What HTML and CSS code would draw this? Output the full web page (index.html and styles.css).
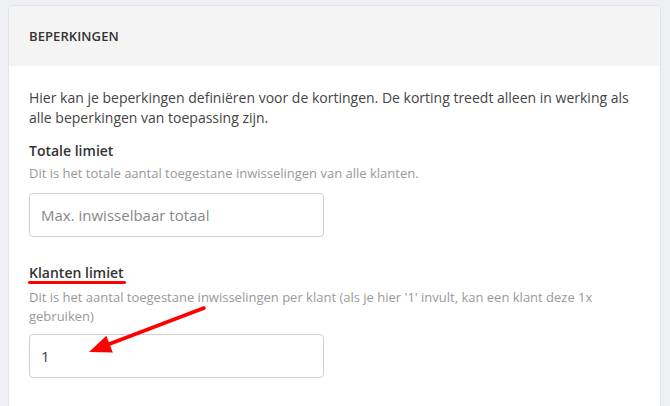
FILE: index.html
```html
<!DOCTYPE html>
<html lang="nl">
<head>
    <meta charset="UTF-8">
    <meta name="viewport" content="width=device-width, initial-scale=1.0">
    <title>Beperkingen</title>
    <link rel="stylesheet" href="styles.css">
</head>
<body>
    <div class="panel">
        <div class="panel-heading">BEPERKINGEN</div>
        <div class="panel-body">
            <p class="intro">Hier kan je beperkingen definiëren voor de kortingen. De korting treedt alleen in werking als alle beperkingen van toepassing zijn.</p>

            <div class="field">
                <label for="totalLimit">Totale limiet</label>
                <p class="help">Dit is het totale aantal toegestane inwisselingen van alle klanten.</p>
                <input type="text" id="totalLimit" placeholder="Max. inwisselbaar totaal">
            </div>

            <div class="field field-customer">
                <label for="customerLimit"><span class="marked">Klanten limiet</span></label>
                <p class="help">Dit is het aantal toegestane inwisselingen per klant (als je hier '1' invult, kan een klant deze 1x gebruiken)</p>
                <input type="text" id="customerLimit" value="1">
            </div>
        </div>
    </div>

    <!-- annotation arrow drawn over the screenshot -->
    <svg class="annotation" width="670" height="406" viewBox="0 0 670 406">
        <line x1="204" y1="308" x2="108" y2="344.5" stroke="#ff0000" stroke-width="3.5" stroke-linecap="round"/>
        <polygon points="89,352 106.4,335.7 112.8,352.5" fill="#ff0000"/>
    </svg>
</body>
</html>
```

FILE: styles.css
```css
html, body {
    height: 100%;
}

body {
    font-family: 'Open Sans', 'Liberation Sans', sans-serif;
    margin: 0;
    padding: 5px 9px 0 8px;
    background-color: #eef0f3;
    color: #444;
    overflow: hidden;
    box-sizing: border-box;
    display: flex;
    flex-direction: column;
}

.panel {
    flex: 1;
    background-color: #fff;
    border: 1px solid #e1e3e6;
    border-bottom: none;
    border-radius: 5px 5px 0 0;
    overflow: hidden;
}

.panel-heading {
    background-color: #f4f4f4;
    height: 60px;
    padding: 0 20px;
    display: flex;
    align-items: center;
    font-size: 13px;
    font-weight: 600;
    color: #333;
    letter-spacing: 0.1px;
}

.panel-body {
    padding: 22px 20px 20px 20px;
}

.intro {
    margin: 0;
    font-size: 14px;
    line-height: 20px;
    color: #444;
}

.field {
    margin-top: 13px;
}

.field-customer {
    margin-top: 26px;
}

label {
    display: block;
    font-size: 14px;
    line-height: 20px;
    font-weight: 600;
    color: #333;
}

.help {
    margin: 3px 0 10px 0;
    font-size: 13px;
    line-height: 19px;
    color: #999;
}

.field-customer .help {
    margin: 5px 0 8px 0;
}

input {
    display: block;
    width: 295px;
    height: 44px;
    box-sizing: border-box;
    padding: 0 11px;
    border: 1px solid #cfcfcf;
    border-radius: 4px;
    font-family: inherit;
    font-size: 15px;
    color: #444;
    outline: none;
}

input::placeholder {
    color: #888;
}

.marked {
    position: relative;
    display: inline-block;
}

.marked::after {
    content: '';
    position: absolute;
    left: -1px;
    right: -2px;
    bottom: -1px;
    height: 3px;
    border-radius: 2px;
    background-color: #ff0000;
}

.annotation {
    position: absolute;
    left: 0;
    top: 0;
    pointer-events: none;
}
```
